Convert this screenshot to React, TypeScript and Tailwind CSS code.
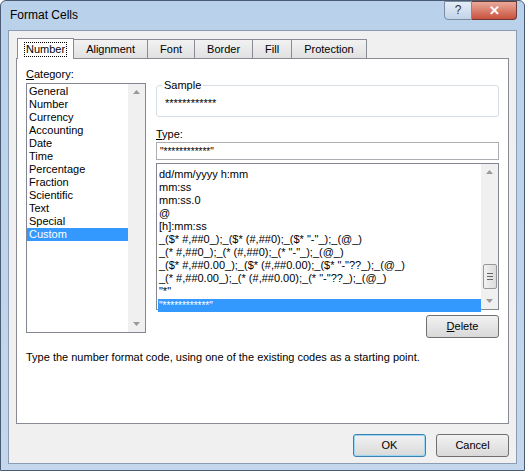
const categories = ["General", "Number", "Currency", "Accounting", "Date", "Time", "Percentage", "Fraction", "Scientific", "Text", "Special", "Custom"];
const formats = [
  "dd/mm/yyyy h:mm",
  "mm:ss",
  "mm:ss.0",
  "@",
  "[h]:mm:ss",
  '_($* #,##0_);_($* (#,##0);_($* "-"_);_(@_)',
  '_(* #,##0_);_(* (#,##0);_(* "-"_);_(@_)',
  '_($* #,##0.00_);_($* (#,##0.00);_($* "-"??_);_(@_)',
  '_(* #,##0.00_);_(* (#,##0.00);_(* "-"??_);_(@_)',
  '"*"',
  '"************"',
];
const tabs = ["Number", "Alignment", "Font", "Border", "Fill", "Protection"];

function Arrow({ up }: { up?: boolean }) {
  return (
    <svg width="7" height="4" viewBox="0 0 7 4">
      <path d={up ? "M0 4 L3.5 0 L7 4Z" : "M0 0 L3.5 4 L7 0Z"} fill="#9a9a9a" />
    </svg>
  );
}

function Btn({ label, u, def }: { label: string; u?: number; def?: boolean }) {
  return (
    <div
      className={`flex h-[23px] w-[73px] items-center justify-center rounded-[3px] border bg-gradient-to-b from-[#f2f2f2] to-[#d9d9d9] ${
        def ? "border-[#3c7fb1] shadow-[inset_0_0_0_1px_#9ad8f5]" : "border-[#707070]"
      }`}
    >
      {u !== undefined ? (
        <span>
          <span className="underline">{label[u]}</span>
          {label.slice(u + 1)}
        </span>
      ) : (
        label
      )}
    </div>
  );
}

export default function App() {
  return (
    <div
      className="h-[471px] w-[525px] rounded-t-[6px] border border-[#4a5c74] bg-gradient-to-b from-[#b9d1ea] to-[#c4d7ec] px-[7px] pb-[7px] text-[11px] leading-[13px] text-black"
      style={{ fontFamily: '"Liberation Sans", Arial, sans-serif' }}
    >
      <div className="flex h-[29px] items-start justify-between">
        <div className="pl-[2px] pt-[8px] text-[12px]">Format Cells</div>
        <div className="flex">
          <div className="flex h-[19px] w-[28px] items-center justify-center rounded-bl-[4px] border border-[#7b8ba0] bg-gradient-to-b from-[#e4edf7] to-[#c2d3e8] text-[12px] text-[#333]">?</div>
          <div className="flex h-[19px] w-[45px] items-center justify-center rounded-br-[4px] border border-l-0 border-[#6b3a36] bg-gradient-to-b from-[#e9a99c] to-[#c7503c] text-[13px] font-bold text-white">✕</div>
        </div>
      </div>
      <div className="flex h-[434px] flex-col border border-[#8b9cb3] bg-[#f0f0f0] px-[7px] pt-[7px]">
        <div className="flex h-[20px] items-end pl-[1px]">
          {tabs.map((t, i) => (
            <div
              key={t}
              className={`-mr-px flex items-center justify-center border border-b-0 border-[#898c95] px-[6px] ${
                i === 0 ? "relative z-10 -mb-px h-[21px] bg-white" : "h-[19px] bg-gradient-to-b from-[#f2f2f2] to-[#e1e1e1]"
              }`}
            >
              <span className={i === 0 ? "border border-dotted border-black px-[1px]" : "px-[6px]"}>{t}</span>
            </div>
          ))}
        </div>
        <div className="flex h-[366px] w-[493px] flex-col border border-[#898c95] bg-white px-[9px] pt-[9px]">
          <div className="flex gap-[10px]">
            <div className="flex w-[121px] flex-col">
              <div className="mb-[2px] h-[13px]"><span className="underline">C</span>ategory:</div>
              <div className="flex h-[250px] border border-[#828790]">
                <div className="flex flex-1 flex-col pt-[1px]">
                  {categories.map((c) => (
                    <div key={c} className={`h-[13px] pl-[2px] ${c === "Custom" ? "bg-[#3399ff] text-white" : ""}`}>{c}</div>
                  ))}
                </div>
                <div className="flex w-[17px] flex-col items-center justify-between bg-[#f0f0f0] py-[6px]">
                  <Arrow up />
                  <Arrow />
                </div>
              </div>
            </div>
            <div className="flex w-[346px] flex-col pt-[17px]">
              <div className="relative h-[32px] rounded-[3px] border border-[#d5dfe5]">
                <span className="absolute -top-[7px] left-[5px] bg-white px-[2px]">Sample</span>
                <div className="pl-[8px] pt-[11px]">************</div>
              </div>
              <div className="mt-[11px] h-[13px]"><span className="underline">T</span>ype:</div>
              <div className="mt-[1px] h-[18px] border border-[#abadb3] pl-[3px] pt-[2px] text-[10px]">"************"</div>
              <div className="mt-[3px] flex h-[147px] border border-[#828790]">
                <div className="flex flex-1 flex-col pl-[1px] pt-[4px]">
                  {formats.map((f, i) => (
                    <div key={i} className={`h-[13px] whitespace-pre pl-[1px] ${i === formats.length - 1 ? "mt-[1px] bg-[#3399ff] text-[10px] text-white" : ""}`}>{f}</div>
                  ))}
                </div>
                <div className="flex w-[17px] flex-col items-center bg-[#f0f0f0] py-[6px]">
                  <Arrow up />
                  <div className="mb-[10px] mt-auto flex h-[25px] w-[14px] flex-col items-center justify-center gap-[2px] rounded-[2px] border border-[#979797] bg-gradient-to-r from-[#f2f2f2] to-[#dcdcdc]">
                    <div className="h-px w-[6px] bg-[#666]" />
                    <div className="h-px w-[6px] bg-[#666]" />
                    <div className="h-px w-[6px] bg-[#666]" />
                  </div>
                  <Arrow />
                </div>
              </div>
              <div className="mt-[5px] flex justify-end">
                <Btn label="Delete" u={0} />
              </div>
            </div>
          </div>
          <div className="mt-[13px]">Type the number format code, using one of the existing codes as a starting point.</div>
        </div>
        <div className="flex justify-end gap-[10px] pt-[10px]">
          <Btn label="OK" def />
          <Btn label="Cancel" />
        </div>
      </div>
    </div>
  );
}
